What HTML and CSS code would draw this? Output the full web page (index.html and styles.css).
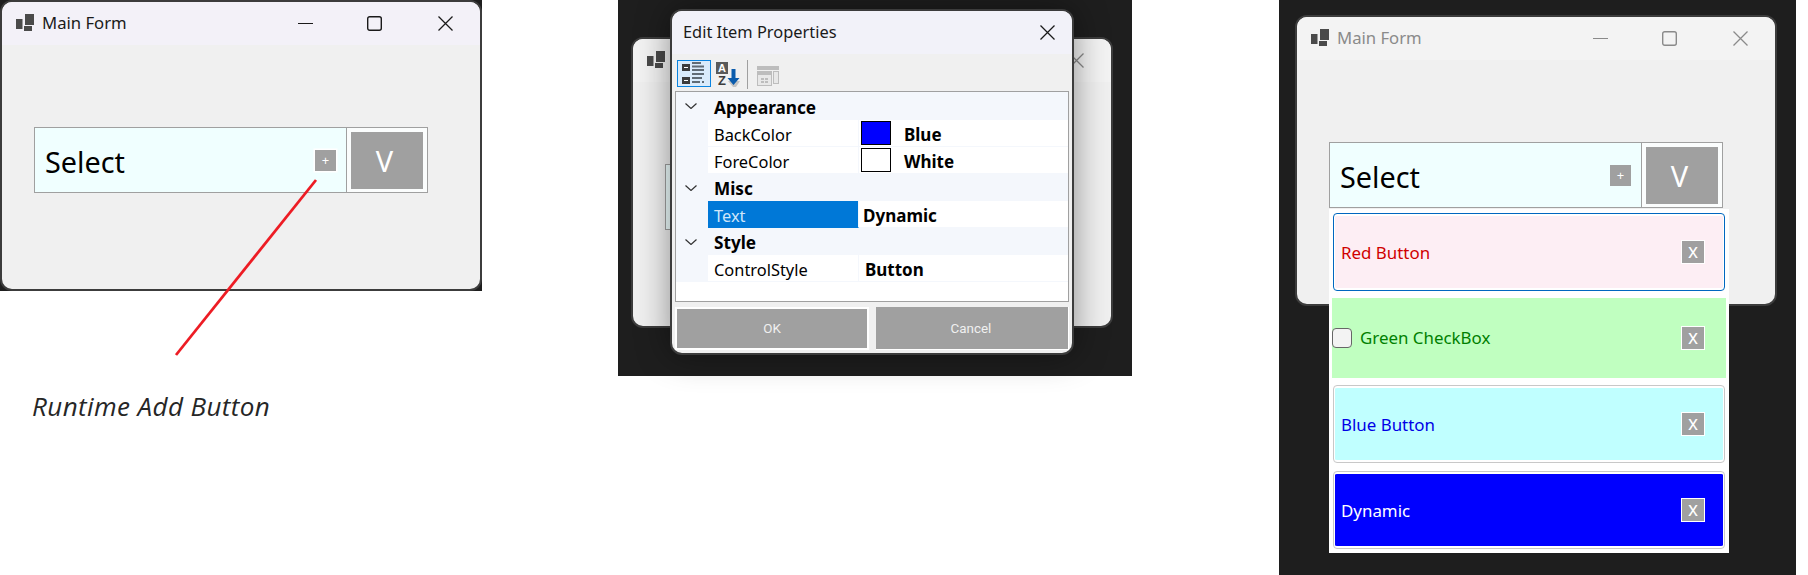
FILE: index.html
```html
<!DOCTYPE html>
<html lang="en">
<head>
<meta charset="utf-8">
<title>Main Form</title>
<link rel="stylesheet" href="styles.css">
</head>
<body>
<svg class="defs" width="0" height="0" aria-hidden="true">
  <symbol id="app" viewBox="0 0 18 17"><path d="M9 0h9v11H9zM0 5h6.5v10H0zM8 12h8v5H8z"/></symbol>
  <symbol id="min" viewBox="0 0 15 15"><path d="M0 7.5h15" fill="none" stroke="currentColor" stroke-width="1.1"/></symbol>
  <symbol id="max" viewBox="0 0 15 15"><rect x=".7" y=".7" width="13.6" height="13.6" rx="2" fill="none" stroke="currentColor" stroke-width="1.4"/></symbol>
  <symbol id="close" viewBox="0 0 15 15"><path d="M.5.5l14 14M14.5.5l-14 14" fill="none" stroke="currentColor" stroke-width="1.25"/></symbol>
  <symbol id="chev" viewBox="0 0 12 6"><path d="M.5.5L6 5.5 11.5.5" fill="none" stroke="#333" stroke-width="1.2"/></symbol>
</svg>

<main class="canvas">

  <section class="scene scene-runtime">
    <div class="form-window">
      <header class="titlebar">
        <svg class="app-icon"><use href="#app"/></svg>
        <span class="title">Main Form</span>
        <div class="caption">
          <svg class="cap-icon"><use href="#min"/></svg>
          <svg class="cap-icon"><use href="#max"/></svg>
          <svg class="cap-icon"><use href="#close"/></svg>
        </div>
      </header>
      <div class="form-body">
        <div class="selector">
          <div class="sel-main"><span class="sel-text">Select</span><span class="add-btn add-btn-ring">+</span></div>
          <div class="sel-drop"><span class="drop-btn">V</span></div>
        </div>
      </div>
    </div>
  </section>

  <svg class="callout" width="340" height="380" aria-hidden="true"><path d="M316 180L176 355" stroke="#ed1c24" stroke-width="2.8" fill="none"/></svg>
  <p class="note">Runtime Add Button</p>

  <section class="scene scene-dialog">
    <div class="form-window inactive back-window">
      <header class="titlebar">
        <svg class="app-icon"><use href="#app"/></svg>
        <div class="caption">
          <svg class="cap-icon"><use href="#close"/></svg>
        </div>
      </header>
      <div class="form-body">
        <div class="selector">
          <div class="sel-main"></div>
        </div>
      </div>
    </div>

    <div class="dialog">
      <header class="dlg-title">
        <span class="dlg-caption">Edit Item Properties</span>
        <svg class="cap-icon"><use href="#close"/></svg>
      </header>
      <div class="toolbar">
        <span class="tool tool-on">
          <svg width="24" height="24" viewBox="0 0 24 24">
            <path fill="#3c3c3c" d="M0 2h8v7H0zM0 15h8v7H0z"/>
            <path fill="#fff" d="M2 5h4v1H2zM2 18h4v1H2z"/>
            <path fill="#5f6b75" d="M10 0h9v2h-9zM10 3.500h12v2H10zM10 7h12v2H10zM10 11h12v2H10zM10 15h10v2H10zM10 19h8v2h-8zM20 19h2v2h-2z"/>
          </svg>
        </span>
        <span class="tool tool-sort">
          <svg width="24" height="26" viewBox="0 0 24 26">
            <rect x="0" y="1" width="12" height="12" fill="#5a5a5a"/>
            <text x="6" y="11" class="az az-a">A</text>
            <text x="6" y="24" class="az az-z">Z</text>
            <path fill="#c4c4c4" d="M12 20l5 6h3l4-6z"/>
            <path fill="#0b5cad" d="M15.500 8h4v9h4l-6 7-6-7h4z"/>
          </svg>
        </span>
        <span class="tool-sep"></span>
        <span class="tool tool-off">
          <svg width="22" height="20" viewBox="0 0 22 20">
            <path fill="#bdbdbd" d="M0 0h22v4H0zM0 5h15v15H0zM16 5h6v13h-6z"/>
            <path fill="#e8e8e8" d="M17 6h4v11h-4zM1 9h13v10H1z"/>
            <path fill="#bdbdbd" d="M4 12h3v2H4zM8 12h3v2H8zM4 15h3v2H4zM8 15h3v2H8z"/>
          </svg>
        </span>
      </div>
      <div class="grid">
        <div class="group"><svg class="chev"><use href="#chev"/></svg><span>Appearance</span></div>
        <div class="prop">
          <span class="prop-name">BackColor</span>
          <span class="prop-val prop-val-color"><i class="swatch swatch-blue"></i><b>Blue</b></span>
        </div>
        <div class="prop">
          <span class="prop-name">ForeColor</span>
          <span class="prop-val prop-val-color"><i class="swatch"></i><b>White</b></span>
        </div>
        <div class="group"><svg class="chev"><use href="#chev"/></svg><span>Misc</span></div>
        <div class="prop">
          <span class="prop-name prop-selected">Text</span>
          <span class="prop-val prop-val-text"><b>Dynamic</b></span>
        </div>
        <div class="group"><svg class="chev"><use href="#chev"/></svg><span>Style</span></div>
        <div class="prop">
          <span class="prop-name">ControlStyle</span>
          <span class="prop-val prop-val-style"><b>Button</b></span>
        </div>
      </div>
      <div class="dlg-actions">
        <span class="dlg-btn dlg-ok">OK</span>
        <span class="dlg-btn dlg-cancel">Cancel</span>
      </div>
    </div>
  </section>

  <section class="scene scene-list">
    <div class="form-window inactive front-window">
      <header class="titlebar">
        <svg class="app-icon"><use href="#app"/></svg>
        <span class="title">Main Form</span>
        <div class="caption">
          <svg class="cap-icon"><use href="#min"/></svg>
          <svg class="cap-icon"><use href="#max"/></svg>
          <svg class="cap-icon"><use href="#close"/></svg>
        </div>
      </header>
      <div class="form-body">
        <div class="selector">
          <div class="sel-main"><span class="sel-text">Select</span><span class="add-btn">+</span></div>
          <div class="sel-drop"><span class="drop-btn">V</span></div>
        </div>
      </div>
    </div>

    <div class="popup">
      <div class="item item-btn item-red"><span class="item-label">Red Button</span><span class="x-btn">x</span></div>
      <div class="item item-check"><i class="check"></i><span class="item-label">Green CheckBox</span><span class="x-btn">x</span></div>
      <div class="item item-btn item-cyan"><span class="item-label">Blue Button</span><span class="x-btn">x</span></div>
      <div class="item item-btn item-dyn"><span class="item-label">Dynamic</span><span class="x-btn">x</span></div>
    </div>
  </section>
</main>
</body>
</html>
```
FILE: styles.css
```css
* { box-sizing: border-box; }

html, body { margin: 0; padding: 0; background: #fff; }

body {
  font-family: "Noto Sans", "Open Sans", sans-serif;
  font-size: 16.4px;
  color: #000;
  overflow: hidden;
}

.defs { position: absolute; }

.canvas {
  position: relative;
  width: 1808px;
  height: 575px;
  overflow: hidden;
}

/* Scenes sit on a free canvas, as pasted screenshots */
.scene { position: absolute; top: 0; background: #1e1e1e; }
.scene-runtime { left: 0; width: 482px; height: 291px; }
.scene-dialog { left: 618px; width: 514px; height: 376px; }
.scene-list { left: 1279px; width: 517px; height: 575px; }

/* Main form window */
.form-window {
  width: 482px;
  height: 291px;
  display: flex;
  flex-direction: column;
  background: #f0f0f0;
  border: 2px solid #3c3c3c;
  border-radius: 12px;
  overflow: hidden;
}
.back-window { position: absolute; left: 13px; top: 37px; }
.front-window { position: absolute; left: 16px; top: 15px; }

.titlebar {
  height: 43px;
  flex: none;
  display: flex;
  align-items: center;
  padding: 0 27px 0 14px;
  background: #f3f1f8;
  color: #1a1a1a;
}
.app-icon { width: 18px; height: 17px; fill: #4a4a4a; margin-top: -2px; }
.title { margin: -2px 0 0 8px; font-size: 16.7px; }
.caption { margin-left: auto; display: flex; gap: 56px; }
.caption .cap-icon:first-child:not(:last-child) { margin-right: -2px; }
.cap-icon { width: 15px; height: 15px; display: block; }

.inactive .titlebar { background: #f3f3f3; color: #8a8a8a; }

.form-body { flex: 1; padding: 82px 0 0 32px; }

.selector {
  width: 394px;
  height: 66px;
  display: flex;
  border: 1px solid #a0a0a0;
}
.sel-main {
  width: 312px;
  flex: none;
  display: flex;
  align-items: center;
  justify-content: space-between;
  padding: 0 10px 0 10px;
  background: #f0ffff;
  border-right: 1px solid #a0a0a0;
}
.sel-text { font-size: 28.8px; line-height: 38px; margin-top: 4px; }
.add-btn {
  width: 21px;
  height: 21px;
  display: flex;
  align-items: center;
  justify-content: center;
  background: #a0a0a0;
  color: #fff;
  font-size: 13px;
  line-height: 1;
}
.add-btn-ring { box-shadow: 0 0 0 1.5px #fff; }

.sel-drop {
  flex: 1;
  padding: 4px;
  padding-bottom: 3px;
  background: #fbfdfd;
  display: flex;
}
.drop-btn {
  flex: 1;
  display: flex;
  align-items: center;
  justify-content: center;
  padding-right: 5px;
  background: #a0a0a0;
  color: #fff;
  font-size: 29px;
  line-height: 1;
}

/* Callout */
.callout { position: absolute; left: 0; top: 0; }
.note {
  position: absolute;
  left: 32px;
  top: 391px;
  margin: 0;
  font-family: "Open Sans", Lato, sans-serif;
  font-style: italic;
  font-size: 26px;
  letter-spacing: .4px;
  line-height: 30px;
  color: #262626;
}

/* Property dialog */
.dialog {
  position: absolute;
  left: 52px;
  top: 9px;
  width: 404px;
  height: 346px;
  display: flex;
  flex-direction: column;
  background: #f0f0f0;
  border: 2px solid #3c3c3c;
  border-radius: 12px;
  overflow: hidden;
  box-shadow: 0 0 34px rgba(0, 0, 0, .42);
}
.dlg-title {
  height: 43px;
  flex: none;
  display: flex;
  align-items: center;
  justify-content: space-between;
  padding: 0 17px 0 11px;
  background: #f2f2f9;
  color: #1a1a1a;
  font-size: 16.4px;
}
.dlg-caption { margin-top: -2px; }
.toolbar {
  height: 37px;
  flex: none;
  display: flex;
  align-items: flex-start;
  padding: 6px 0 0 5px;
}
.tool {
  height: 27px;
  display: flex;
  align-items: center;
  justify-content: center;
}
.tool-on { width: 34px; background: #d9ebfb; border: 1px solid #0a84e0; }
.tool-sort { width: 24px; margin-left: 5px; }
.tool-sep { width: 1px; height: 29px; background: #a0a0a0; margin-left: 7px; }
.tool-off { width: 22px; margin: 2px 0 0 9px; }
.az { font-family: "Liberation Sans", sans-serif; font-weight: 700; text-anchor: middle; font-size: 11px; }
.az-a { fill: #fff; }
.az-z { fill: #3c3c3c; font-size: 13px; }

.grid {
  flex: none;
  height: 211px;
  margin: 0 3px;
  border: 1px solid #a0a0a0;
  background: #fff;
}
.group {
  height: 27px;
  padding-top: 2px;
  display: flex;
  align-items: center;
  background: #f4f7fc;
  font-weight: 700;
  font-size: 17.2px;
}
.group:first-child { height: 28px; }
.chev { width: 12px; height: 6px; margin: -2px 17px 0 9px; flex: none; }
.prop {
  height: 27px;
  display: flex;
  padding-left: 32px;
  background: #f4f7fc;
}
.prop-name {
  width: 151px;
  flex: none;
  padding: 2px 0 0 6px;
  display: flex;
  align-items: center;
  background: #fff;
  border-bottom: 1px solid #f4f7fc;
  border-right: 1px solid #f4f7fc;
}
.prop-selected { background: #0078d7; color: #cfe6fa; border-bottom-color: #0078d7; }
.prop-val {
  flex: 1;
  display: flex;
  align-items: center;
  background: #fff;
  border-bottom: 1px solid #f4f7fc;
  font-size: 17px;
}
.prop-val b { margin-top: 2px; }
.prop-val-color { padding-left: 2px; }
.prop-val-text { padding-left: 4px; }
.prop-val-style { padding-left: 6px; }
.swatch {
  width: 30px;
  height: 24px;
  margin-right: 13px;
  background: #fff;
  border: 1px solid #000;
}
.swatch-blue { background: #0000ff; }

.dlg-actions {
  flex: 1;
  display: flex;
  gap: 7px;
  padding: 5px 3px 0 3px;
}
.dlg-btn {
  height: 43px;
  display: flex;
  align-items: center;
  justify-content: center;
  background: #a0a0a0;
  color: #f0f0f0;
  font-family: Roboto, sans-serif;
  font-size: 13.4px;
}
.dlg-ok { width: 194px; border: 2px solid #fff; }
.dlg-cancel { flex: 1; padding-right: 2px; border-bottom: 1px solid #fff; border-right: 1px solid #fff; }

/* Dropdown list */
.popup {
  position: absolute;
  left: 50px;
  top: 209px;
  width: 400px;
  height: 344px;
  padding-top: 4px;
  display: flex;
  flex-direction: column;
  background: #fff;
}
.item { display: flex; align-items: center; flex: none; font-size: 16.9px; }
.item-btn {
  height: 78px;
  margin: 0 4px;
  width: 392px;
  border: 1px solid #c8c8c8;
  border-radius: 4px;
  padding: 2px 1px;
  background-clip: content-box;
}
.item-label { line-height: 22px; margin-top: 1px; }
.item-btn .item-label { margin-left: 6px; }
.x-btn {
  width: 24px;
  height: 24px;
  margin-left: auto;
  display: flex;
  align-items: center;
  justify-content: center;
  background: #a0a0a0;
  border: 1px solid #fff;
  color: #fff;
  font-size: 19px;
  line-height: 1;
  padding-bottom: 1px;
}
.item-btn .x-btn { margin-right: 18px; }
.item-red { background-color: #fdeef4; color: #d00000; border-color: #0067c0; }
.item-cyan { margin-top: 7px; background-color: #c0ffff; color: #0000e6; }
.item-dyn { margin-top: 8px; background-color: #0000ff; color: #fff; }
.item-check {
  height: 80px;
  margin: 7px 3px 0 3px;
  width: 394px;
  background: #c0ffc0;
  color: #008000;
}
.item-check .item-label { margin-top: -1px; }
.item-check .x-btn { margin-right: 21px; }
.check {
  width: 20px;
  height: 20px;
  margin-right: 8px;
  background: #f3f3f3;
  border: 1px solid #666;
  border-radius: 4px;
}
```
